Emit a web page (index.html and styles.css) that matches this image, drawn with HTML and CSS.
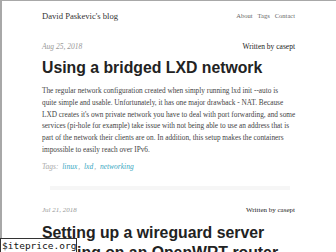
FILE: index.html
```html
<!doctype html>
<html lang="en">
<head>
    <meta charset="UTF-8">
    <title>David Paskevic's blog</title>
	<link rel="stylesheet" href="styles.css">
</head>
<body>
	<div class="page">
		<div class="header">
			<a class="brand" href="#">David Paskevic's blog</a>
			<ul class="nav">
				<li><a href="#">About</a></li>
				<li><a href="#">Tags</a></li>
				<li><a href="#">Contact</a></li>
			</ul>
		</div>
		<div class="post">
			<div class="meta">
				<span class="date">Aug 25, 2018</span>
				<span class="author">Written by casept</span>
			</div>
			<h1>Using a bridged LXD network</h1>
			<p>The regular network configuration created when simply running lxd init --auto is<br>
			quite simple and usable. Unfortunately, it has one major drawback - NAT. Because<br>
			LXD creates it's own private network you have to deal with port forwarding, and some<br>
			services (pi-hole for example) take issue with not being able to use an address that is<br>
			part of the network their clients are on. In addition, this setup makes the containers<br>
			impossible to easily reach over IPv6.</p>
			<div class="tags">Tags: <a href="#">linux</a>, <a href="#">lxd</a>, <a href="#">networking</a></div>
		</div>
		<div class="sep"></div>
		<div class="post post2">
			<div class="meta">
				<span class="date">Jul 21, 2018</span>
				<span class="author">Written by casept</span>
			</div>
			<h1>Setting up a wireguard server running on an OpenWRT router</h1>
		</div>
	</div>
	<div class="badge">$iteprice.org</div>
</body>
</html>
```

FILE: styles.css
```css
*{
	margin:0;
	padding:0;
}
html,body{
	height:100%;
	overflow:hidden;
}
body{
	background:#fff;
	border-top:1px solid #a8a8a8;
	border-left:2px solid #a8a8a8;
	font-family:"Liberation Serif",serif;
	color:#444;
}
a{
	text-decoration:none;
}
li{
	list-style:none;
}
.page{
	width:256px;
	margin-left:40px;
}
.header{
	display:flex;
	justify-content:space-between;
	align-items:center;
	height:29px;
	padding-right:3px;
}
.brand{
	font-size:8.6px;
	color:#333;
}
.nav{
	display:flex;
	gap:5px;
	font-size:6.5px;
}
.nav a{
	color:#666;
}
.post{
	padding-top:10px;
}
.meta{
	display:flex;
	justify-content:space-between;
	align-items:center;
	height:12px;
	padding-right:3px;
}
.date{
	font-style:italic;
	font-size:7.5px;
	color:#999;
}
.author{
	font-size:7.5px;
	color:#222;
}
h1{
	font-family:"Liberation Sans",Arial,sans-serif;
	font-weight:bold;
	font-size:15.8px;
	line-height:20px;
	color:#222;
	margin:6px 0 7px;
}
p{
	font-size:7.3px;
	line-height:11.75px;
}
.tags{
	margin-top:6px;
	font-style:italic;
	font-size:7.5px;
	color:#aaa;
}
.tags a{
	color:#3aa7bf;
	margin:0 1px 0 2px;
}
.sep{
	height:4px;
	margin:15px 8px 0 8px;
	background:#f6f6f6;
}
.post2{
	padding-top:14px;
}
.post2 .date,.post2 .author{
	font-size:7px;
}
.post2 h1{
	margin-top:7px;
}
.badge{
	position:absolute;
	left:0;
	top:238px;
	width:74px;
	height:20px;
	border:1px solid #333;
	background:#fff;
	font-family:"DejaVu Sans Mono",monospace;
	font-size:9.5px;
	line-height:14px;
	padding-left:1px;
	color:#111;
}
```
